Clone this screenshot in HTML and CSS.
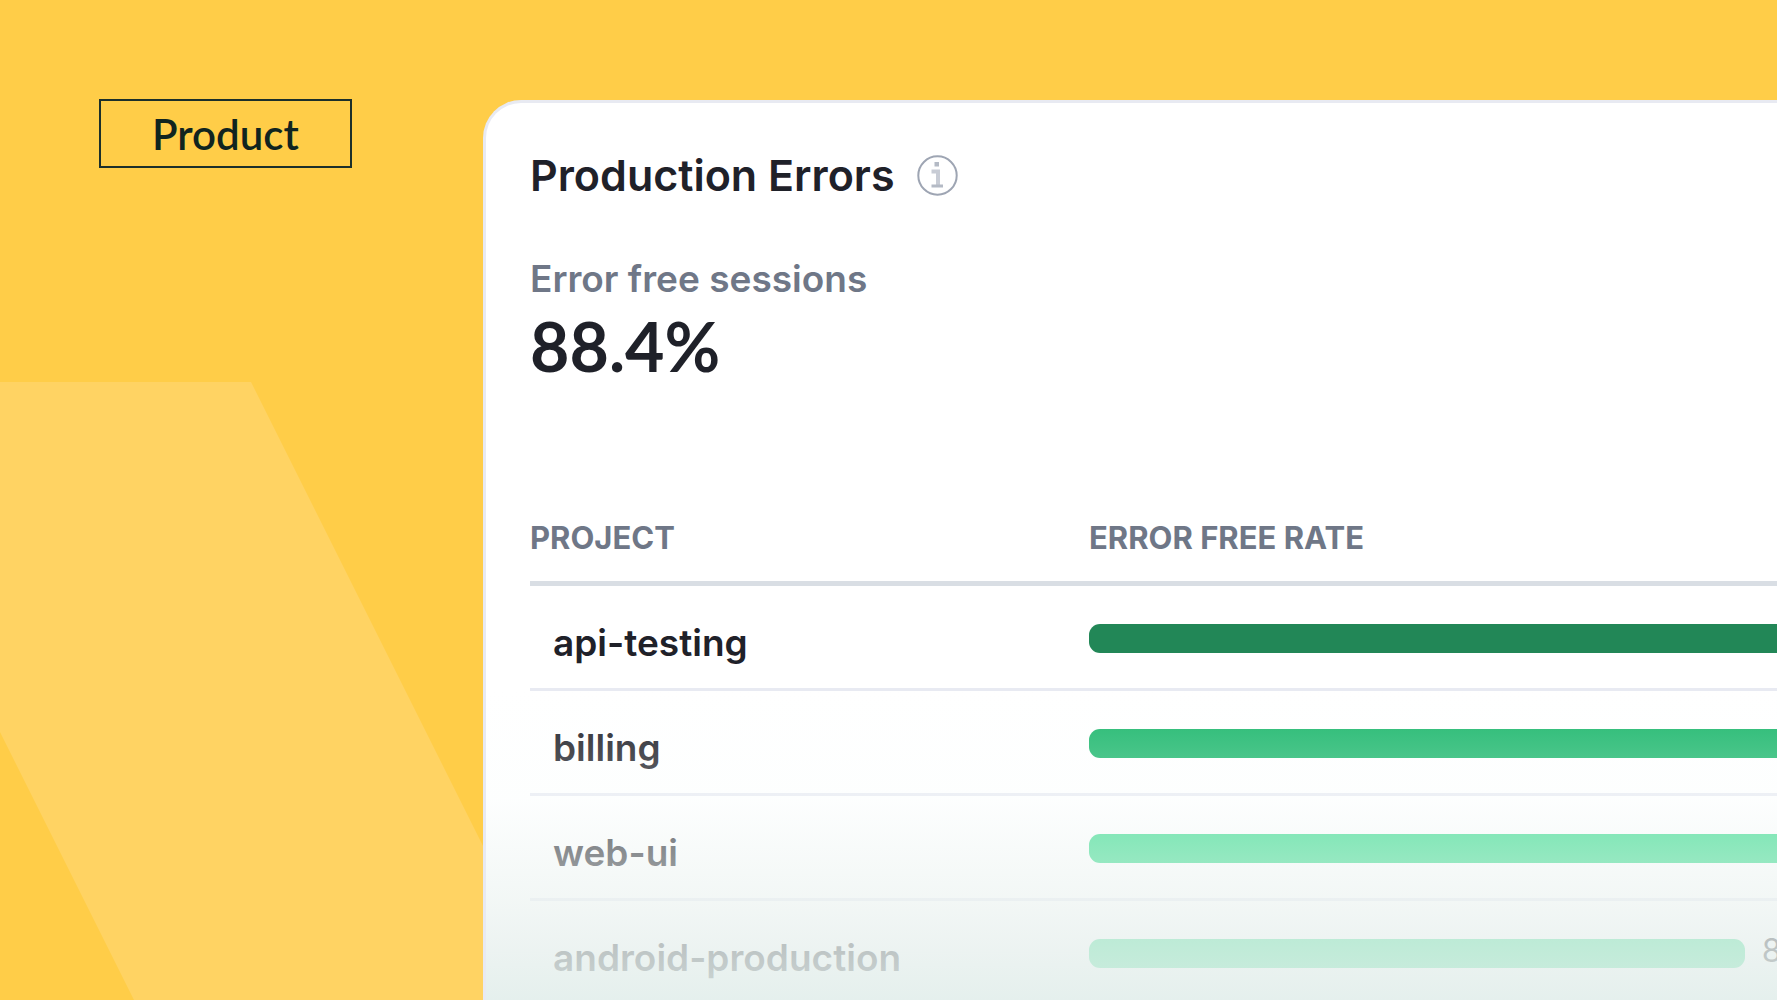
FILE: index.html
```
<!DOCTYPE html>
<html lang="en">
<head>
    <meta charset="UTF-8">
    <meta name="viewport" content="width=device-width, initial-scale=1.0">
    <title>Production Errors</title>
    <link rel="stylesheet" href="styles.css">
</head>
<body>

<svg class="backdrop" width="560" height="618" viewBox="0 0 560 618" aria-hidden="true">
    <polygon points="0,0 251,0 560,618 134,618 0,350"/>
</svg>

<aside class="side">
    <span class="tag">Product</span>
</aside>

<main class="card">
    <header class="card-header">
        <h1>Production Errors</h1>
        <svg class="info" viewBox="0 0 41 41" role="img" aria-label="Info">
            <circle cx="20.5" cy="20.5" r="19.2"/>
            <path class="info-stem" d="M14.5 16.5H21V31"/>
            <path class="info-base" d="M14.5 31H26"/>
            <rect x="17.5" y="7" width="4.5" height="4.5"/>
        </svg>
    </header>

    <div class="summary">
        <p class="summary-label">Error free sessions</p>
        <p class="summary-value">88.4%</p>
    </div>

    <table class="projects">
        <thead>
            <tr>
                <th class="col-project" scope="col">PROJECT</th>
                <th scope="col">ERROR FREE RATE</th>
            </tr>
        </thead>
        <tbody>
            <tr>
                <td class="name">api-testing</td>
                <td class="rate"><div class="rate-row"><div class="bar bar-best" style="width: 112%"></div></div></td>
            </tr>
            <tr>
                <td class="name">billing</td>
                <td class="rate"><div class="rate-row"><div class="bar bar-good" style="width: 108%"></div></div></td>
            </tr>
            <tr>
                <td class="name">web-ui</td>
                <td class="rate"><div class="rate-row"><div class="bar bar-fair" style="width: 104%"></div></div></td>
            </tr>
            <tr>
                <td class="name">android-production</td>
                <td class="rate"><div class="rate-row"><div class="bar bar-fair" style="width: 95.3%"></div><span class="percent">8</span></div></td>
            </tr>
        </tbody>
    </table>

    <div class="fade"></div>
</main>

</body>
</html>
```
FILE: styles.css
```
* {
    box-sizing: border-box;
}
body {
    margin: 0;
    height: 100vh;
    overflow: hidden;
    display: flex;
    position: relative;
    padding-top: 99px;
    background-color: #ffcd48;
    color: #1f2129;
    font-family: 'Inter', sans-serif;
}
h1, p {
    margin: 0;
}

/* slanted shape behind the card */
.backdrop {
    position: absolute;
    left: 0;
    bottom: 0;
    fill: #ffd363;
}

.side {
    flex: 0 0 483px;
    padding-left: 99px;
    position: relative;
}
.tag {
    display: inline-block;
    padding: 1px 51px 0;
    border: 2px solid #1c2f2a;
    color: #10241f;
    font-family: 'Lato', sans-serif;
    font-size: 42px;
    font-weight: 600;
    line-height: 64px;
}

.card {
    flex: 1;
    min-width: 0;
    position: relative;
    overflow: hidden;
    margin-top: 1px;
    padding: 46px 0 0 44px;
    background: #fff;
    border: 3px solid #e8eaf2;
    border-width: 3px 0 0 3px;
    border-top-left-radius: 38px;
}
.card-header {
    display: flex;
    align-items: center;
    gap: 22px;
}
.card-header h1 {
    font-size: 43px;
    font-weight: 600;
    line-height: 52px;
}
.info {
    width: 41px;
    height: 41px;
    fill: none;
    stroke: #9ea5b3;
    stroke-width: 2;
}
.info rect {
    fill: #b4bac5;
    stroke: none;
}
.info-stem {
    stroke: #c8ccd5;
    stroke-width: 4;
}
.info-base {
    stroke: #b4bac5;
    stroke-width: 3;
}

.summary {
    margin-top: 56px;
}
.summary-label {
    color: #6f7787;
    font-size: 37px;
    font-weight: 600;
    line-height: 44px;
}
.summary-value {
    margin-top: 5px;
    font-family: 'Lato', sans-serif;
    font-size: 68px;
    font-weight: 700;
    line-height: 80px;
}

.projects {
    width: 100%;
    margin-top: 132px;
    table-layout: fixed;
    border-spacing: 0;
}
.projects th {
    padding: 0 0 23px;
    border-bottom: 5px solid #d9dee4;
    color: #6f7787;
    font-size: 31px;
    font-weight: 700;
    line-height: 40px;
    text-align: left;
}
.projects .col-project {
    width: 559px;
}
.projects td {
    height: 105px;
    padding: 0;
    border-bottom: 3px solid #e8eaf2;
}
.projects .name {
    padding: 12px 0 0 23px;
    font-size: 37px;
    font-weight: 600;
    line-height: 44px;
}
.projects .rate {
    padding-top: 3px;
}
.rate-row {
    display: flex;
    gap: 17px;
}
.bar {
    flex-shrink: 0;
    height: 29px;
    border-radius: 11px;
}
.bar-best {
    background: #228757;
}
.bar-good {
    background: #1cb76c;
}
.bar-fair {
    background: #2cd986;
}
.percent {
    font-size: 32px;
    line-height: 24px;
}

/* lower rows dissolve into the card's edge */
.fade {
    position: absolute;
    left: 0;
    right: 0;
    bottom: 0;
    height: 310px;
    background: linear-gradient(rgba(255, 255, 255, 0), rgba(249, 253, 252, 0.33) 35%, rgba(236, 243, 241, 0.67) 68%, rgba(232, 240, 238, 0.78) 82%, rgba(226, 238, 235, 0.9));
}
```
